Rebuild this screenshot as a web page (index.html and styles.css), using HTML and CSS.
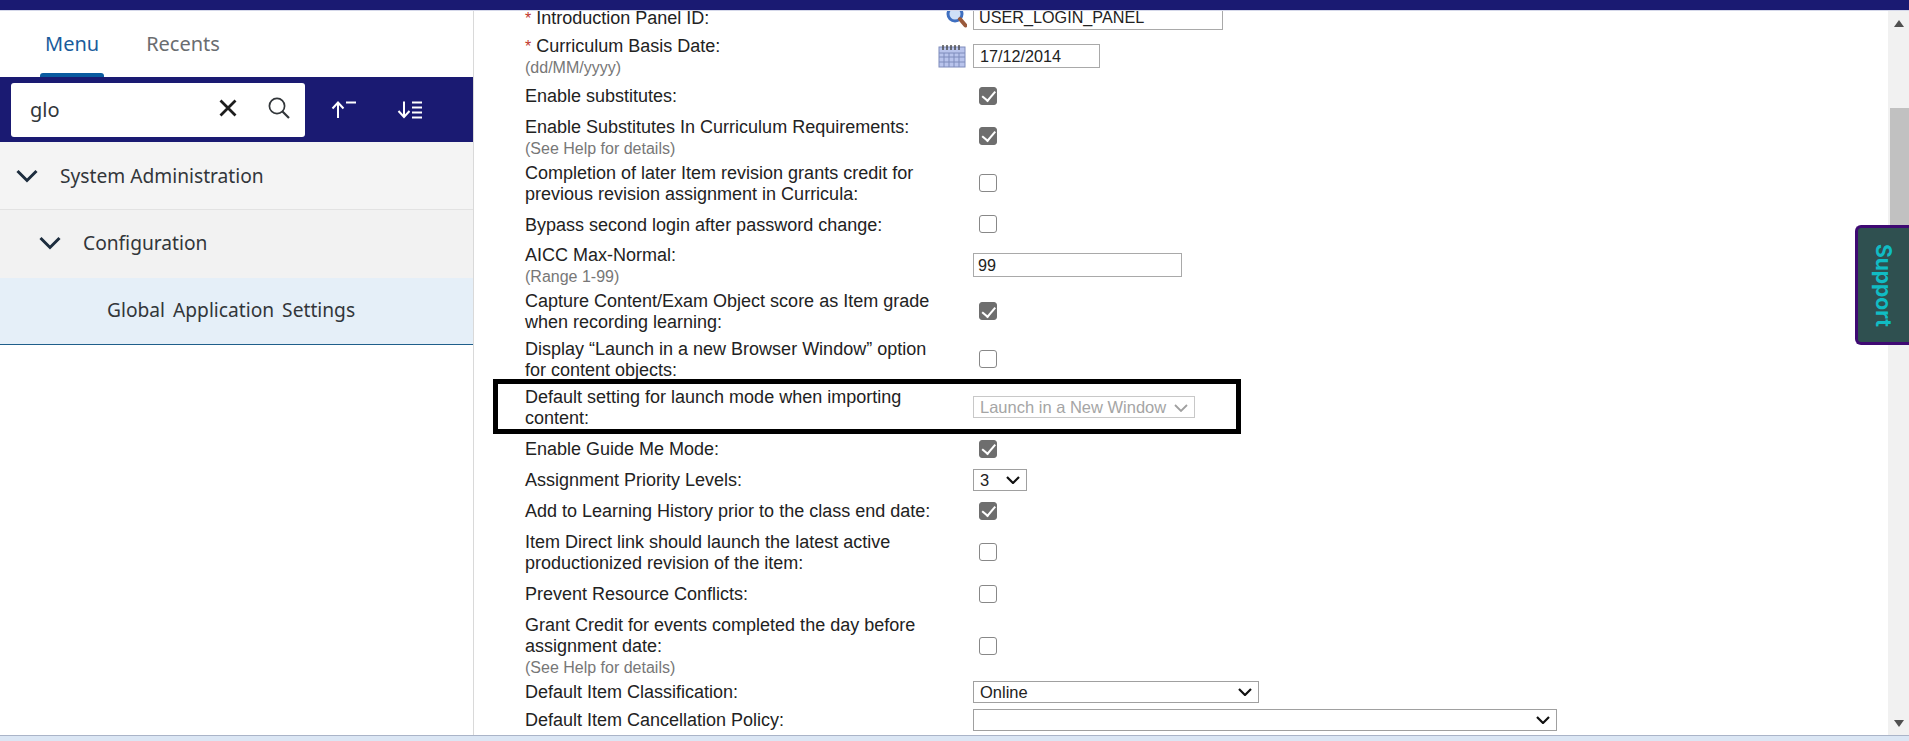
FILE: index.html
```html
<!DOCTYPE html>
<html lang="en">
<head>
<meta charset="utf-8">
<title>Global Application Settings</title>
<link rel="stylesheet" href="styles.css">
</head>
<body>
<header class="topbar"></header>
<div class="main">
  <aside class="sidebar">
    <nav class="tabs">
      <a class="tab tab-active">Menu</a>
      <a class="tab">Recents</a>
    </nav>
    <div class="searchbar">
      <div class="searchbox">
        <span class="searchtext">glo</span>
        <svg class="ic-x" viewBox="0 0 18 18"><path d="M1.500 1.500 16.500 16.500M16.500 1.500 1.500 16.500" fill="none" stroke="#1d1d1d" stroke-width="2.800"/></svg>
        <svg class="ic-search" viewBox="0 0 22 22"><circle cx="9" cy="9" r="7.600" fill="none" stroke="#32363a" stroke-width="1.700"/><path d="M14.500 14.500 21 21" fill="none" stroke="#32363a" stroke-width="2.200"/></svg>
      </div>
      <svg class="ic-sort" viewBox="0 0 26 20"><path d="M7 18V3M1.500 8.500 7 2.500l5.500 6M15 2.500h10" fill="none" stroke="#fff" stroke-width="2"/></svg>
      <svg class="ic-sort ic-sort-down" viewBox="0 0 26 20"><path d="M7 1.500v15M1.500 11 7 17l5.500-6M15 2.500h10M15 7.500h10M15 12.500h10M15 17.500h10" fill="none" stroke="#fff" stroke-width="2"/></svg>
    </div>
    <ul class="tree">
      <li class="node node-l1"><svg class="chev" viewBox="0 0 22 14"><path d="M1.500 2 11 11.500 20.500 2" fill="none" stroke="#1d2d3e" stroke-width="3"/></svg>System Administration</li>
      <li class="node node-l2"><svg class="chev" viewBox="0 0 22 14"><path d="M1.500 2 11 11.500 20.500 2" fill="none" stroke="#1d2d3e" stroke-width="3"/></svg>Configuration</li>
      <li class="node node-l3">Global Application Settings</li>
    </ul>
  </aside>
  <main class="content">
    <div class="form">
      <div class="row h35"><div class="lbl"><span class="req">*</span> Introduction Panel ID:</div><div class="ctl">
        <svg class="ic-lens" viewBox="0 0 21 22"><circle cx="9" cy="8" r="7" fill="#cfe0f7" stroke="#3f6fc0" stroke-width="3"/><path d="M14 13 19.500 19.500" stroke="#9a5a3c" stroke-width="4" stroke-linecap="round"/></svg>
        <input class="txt txt-id" value="USER_LOGIN_PANEL"></div></div>
      <div class="row h42"><div class="lbl"><span class="req">*</span> Curriculum Basis Date:<small>(dd/MM/yyyy)</small></div><div class="ctl">
        <svg class="ic-cal" viewBox="0 0 28 24"><rect x="1" y="3" width="26" height="20" fill="#b9c4ec" stroke="#7f8cbc"/><path d="M1 9H27M1 13H27M1 18H27M6 9V23M11 9V23M16 9V23M21 9V23" stroke="#7f8cbc"/><path d="M5 1V6M9 1V6M13 1V6M17 1V6M21 1V6" stroke="#444" stroke-width="1.400"/></svg>
        <input class="txt txt-date" value="17/12/2014"></div></div>
      <div class="row h37"><div class="lbl">Enable substitutes:</div><div class="ctl"><input type="checkbox" class="cb" checked disabled></div></div>
      <div class="row h46"><div class="lbl">Enable Substitutes In Curriculum Requirements:<small>(See Help for details)</small></div><div class="ctl"><input type="checkbox" class="cb cb-up" checked disabled></div></div>
      <div class="row h46"><div class="lbl">Completion of later Item revision grants credit for previous revision assignment in Curricula:</div><div class="ctl"><input type="checkbox" class="cb"></div></div>
      <div class="row h36"><div class="lbl">Bypass second login after password change:</div><div class="ctl"><input type="checkbox" class="cb"></div></div>
      <div class="row h46"><div class="lbl">AICC Max-Normal:<small>(Range 1-99)</small></div><div class="ctl"><input class="txt txt-num" value="99"></div></div>
      <div class="row h46"><div class="lbl">Capture Content/Exam Object score as Item grade when recording learning:</div><div class="ctl"><input type="checkbox" class="cb" checked disabled></div></div>
      <div class="row h50"><div class="lbl">Display “Launch in a new Browser Window” option for content objects:</div><div class="ctl"><input type="checkbox" class="cb"></div></div>
      <div class="row h46"><div class="lbl">Default setting for launch mode when importing content:</div><div class="ctl"><select class="sel sel-launch" disabled><option>Launch in a New Window</option></select><svg class="sel-chev sel-chev-off" viewBox="0 0 14 8"><path d="M1 1 7 7 13 1" fill="none"/></svg></div><div class="highlight"></div></div>
      <div class="row h37"><div class="lbl">Enable Guide Me Mode:</div><div class="ctl"><input type="checkbox" class="cb" checked disabled></div></div>
      <div class="row h25"><div class="lbl">Assignment Priority Levels:</div><div class="ctl"><select class="sel sel-level"><option>3</option></select><svg class="sel-chev" viewBox="0 0 14 8"><path d="M1 1 7 7 13 1" fill="none"/></svg></div></div>
      <div class="row h37"><div class="lbl">Add to Learning History prior to the class end date:</div><div class="ctl"><input type="checkbox" class="cb" checked disabled></div></div>
      <div class="row h46"><div class="lbl">Item Direct link should launch the latest active productionized revision of the item:</div><div class="ctl"><input type="checkbox" class="cb"></div></div>
      <div class="row h37"><div class="lbl">Prevent Resource Conflicts:</div><div class="ctl"><input type="checkbox" class="cb"></div></div>
      <div class="row h67"><div class="lbl">Grant Credit for events completed the day before assignment date:<small>(See Help for details)</small></div><div class="ctl"><input type="checkbox" class="cb"></div></div>
      <div class="row h25"><div class="lbl">Default Item Classification:</div><div class="ctl"><select class="sel sel-class"><option>Online</option></select><svg class="sel-chev" viewBox="0 0 14 8"><path d="M1 1 7 7 13 1" fill="none"/></svg></div></div>
      <div class="row h31"><div class="lbl">Default Item Cancellation Policy:</div><div class="ctl"><select class="sel sel-cancel"><option></option></select><svg class="sel-chev" viewBox="0 0 14 8"><path d="M1 1 7 7 13 1" fill="none"/></svg></div></div>
    </div>
  </main>
  <div class="scrollbar">
    <span class="arrow-up"></span>
    <span class="thumb"></span>
    <span class="arrow-down"></span>
  </div>
  <button class="support"><span>Support</span></button>
</div>
<footer class="bottomstrip"></footer>
</body>
</html>
```

FILE: styles.css
```css
* { box-sizing: border-box; }
html, body { margin: 0; height: 100%; overflow: hidden; }
body {
  display: flex;
  flex-direction: column;
  background: #fff;
  font-family: "Liberation Sans", Arial, sans-serif;
}
.topbar { height: 11px; flex: none; background: #1a1a72; border-bottom: 1px solid #d5d8ea; }
.main { flex: 1; min-height: 0; display: flex; position: relative; }
.bottomstrip {
  height: 6px; flex: none;
  background: linear-gradient(#aab4c8 0 1px, #dbe6f4 1px);
}

/* Sidebar */
.sidebar {
  width: 474px; flex: none;
  border-right: 1px solid #d9d9d9;
  font-family: "Noto Sans", "Open Sans", sans-serif;
  color: #32363a;
}
.tabs { height: 66px; display: flex; gap: 47px; padding-left: 45px; align-items: center; }
.tab { position: relative; font-size: 20px; color: #6a6d70; line-height: 66px; }
.tab-active { color: #1a5c9c; }
.tab-active::after {
  content: ""; position: absolute;
  left: -5px; right: -5px; bottom: 0; height: 4px;
  background: #0a5ba0; border-radius: 3px 3px 0 0;
}
.searchbar { height: 65px; background: #1a1a72; display: flex; align-items: center; padding-left: 11px; }
.searchbox {
  width: 294px; height: 54px; background: #fff; border-radius: 3px;
  display: flex; align-items: center; padding-left: 19px;
}
.searchtext { font-size: 20px; flex: 1; color: #32363a; }
.ic-x { width: 18px; height: 18px; margin-right: 31px; margin-top: -4px; }
.ic-search { width: 22px; height: 22px; margin-right: 15px; margin-top: -4px; }
.ic-sort { width: 26px; height: 20px; margin-left: 26px; }
.ic-sort-down { margin-left: 40px; }
.tree { list-style: none; margin: 0; padding: 0; font-size: 19.200px; }
.node { height: 68px; display: flex; align-items: center; border-bottom: 1px solid #e2e2e2; }
.chev { width: 22px; height: 14px; margin-right: 22px; }
.node-l1 { background: #f4f4f4; padding-left: 16px; }
.node-l2 { background: #f2f2f2; padding: 0 0 3px 39px; border-bottom: 0; }
.node-l3 { height: 67px; background: #e5eff8; padding: 0 0 3px 107px; border-bottom: 1px solid #1f5f8b; word-spacing: 3px; }

/* Form */
.content { flex: 1; min-width: 0; overflow: hidden; }
.form { padding-left: 51px; }
.row { display: flex; align-items: center; position: relative; }
.h25 { height: 25px; }
.h31 { height: 31px; }
.h35 { height: 25px; margin-top: -6px; margin-bottom: 5px; }
.h36 { height: 36px; }
.h37 { height: 37px; }
.h42 { height: 42px; }
.h46 { height: 46px; }
.h50 { height: 50px; }
.h67 { height: 67px; }
.lbl { width: 448px; flex: none; font-size: 18px; line-height: 21px; color: #222; padding: 2px 40px 0 0; }
.lbl small { display: block; font-size: 16px; color: #777; }
.req { color: #c0392b; font-size: 16px; font-family: "Liberation Sans", Arial, sans-serif; }
.ctl { display: flex; align-items: center; position: relative; }
.txt {
  height: 24px; padding: 0 4px; border: 1px solid #a9a9a9; border-radius: 0;
  font: 16.200px "Liberation Sans", Arial, sans-serif; color: #222; background: #fff;
}
.txt-id { width: 250px; height: 25px; padding-left: 5px; }
.txt-date { width: 127px; padding-left: 6px; }
.txt-num { width: 209px; }
.ic-lens { position: absolute; left: -27px; bottom: 2px; width: 21px; height: 22px; }
.ic-cal { position: absolute; left: -35px; top: 0; width: 28px; height: 24px; }
.cb {
  appearance: none; position: relative; margin: 0 0 0 6px;
  width: 18px; height: 18px; border: 1.500px solid #888; border-radius: 3px; background: #fff;
}
.cb-up { margin-top: -3px; }
.cb:checked { background: #6e6e6e; border-color: #6e6e6e; }
.cb:checked::after {
  content: ""; position: absolute; left: 4.500px; top: 0.500px;
  width: 5.500px; height: 10.500px;
  border: solid #fff; border-width: 0 2.500px 2.500px 0; transform: rotate(40deg);
}
.sel {
  appearance: none; height: 22px; padding: 0 0 0 6px; border: 1px solid #a0a0a0; border-radius: 0; background: #fff;
  font: 16.500px "Liberation Sans", Arial, sans-serif; color: #222;
}
.sel:disabled { color: #a5a5a5; border-color: #c8c8c8; opacity: 1; }
.sel-launch { width: 222px; }
.sel-level { width: 54px; }
.sel-class { width: 286px; }
.sel-cancel { width: 584px; }
.sel-chev {
  position: absolute; right: 7px; top: 7.500px; width: 14px; height: 8px;
  stroke: #111; stroke-width: 2.200; pointer-events: none;
}
.sel-chev-off { stroke: #a0a0a0; stroke-width: 1.800; }
.highlight {
  position: absolute; left: -32px; top: -5px; width: 748px; height: 55px;
  border: 5px solid #000; pointer-events: none;
}

/* Scrollbar */
.scrollbar { width: 21px; flex: none; background: #f1f1f1; position: relative; }
.thumb { position: absolute; left: 2px; right: 0; top: 97px; height: 200px; background: #c1c1c1; }
.arrow-up, .arrow-down {
  position: absolute; left: 6px; width: 0; height: 0;
  border-left: 5.500px solid transparent; border-right: 5.500px solid transparent;
}
.arrow-up { top: 9px; border-bottom: 7px solid #505050; }
.arrow-down { bottom: 8px; border-top: 7px solid #505050; }

/* Support tab */
.support {
  position: absolute; right: 0; top: 214px;
  width: 54px; height: 120px; padding: 0;
  background: #2f5050; border: 3px solid #3f0a73; border-right: 0; border-radius: 6px 0 0 6px;
  color: #10bcc4; font: 700 21px Inter, "Noto Sans", sans-serif;
  display: flex; align-items: center; justify-content: center;
}
.support span { writing-mode: vertical-rl; }
```
